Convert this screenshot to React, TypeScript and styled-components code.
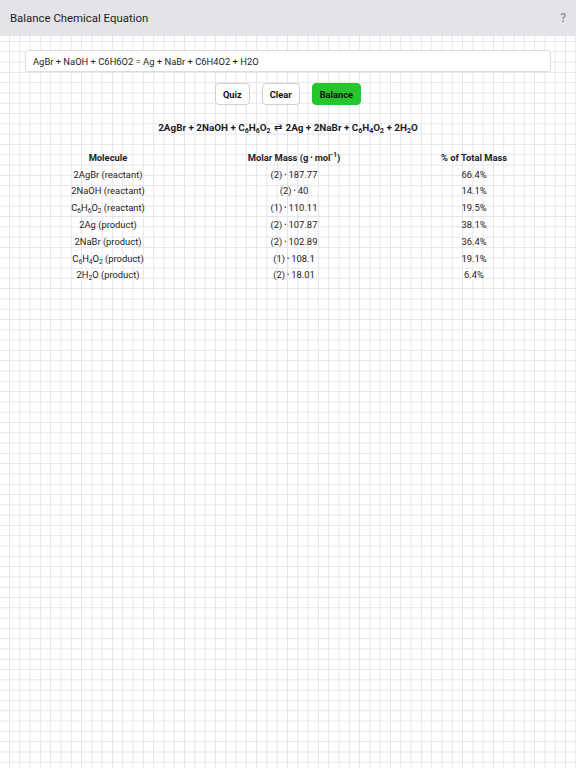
import React from 'react'
import styled, { createGlobalStyle } from 'styled-components'

const GlobalStyle = createGlobalStyle`
  html, body {
    margin: 0;
    padding: 0;
    background: #ffffff;
    font-family: Roboto, "Liberation Sans", "Noto Sans", sans-serif;
    color: #1c1c1e;
  }
`

const Page = styled.div`
  width: 576px;
  height: 768px;
  display: flex;
  flex-direction: column;
  overflow: hidden;
`

const Header = styled.header`
  height: 36px;
  flex-shrink: 0;
  background: #e4e3e8;
  display: flex;
  align-items: center;
  justify-content: space-between;
  padding: 0 10px 0 10px;
  font-size: 11.4px;
  color: #1c1c1e;
`

const Help = styled.span`
  color: #8e8e93;
  font-size: 12px;
  font-weight: 500;
`

const Sheet = styled.main`
  flex: 1;
  background-color: #ffffff;
  background-image:
    linear-gradient(to right, #e6e3ea 1px, transparent 1px),
    linear-gradient(to bottom, #e6e3ea 1px, transparent 1px);
  background-size: 10.3px 10.3px;
  background-position: 9px 5px;
  display: flex;
  flex-direction: column;
  align-items: center;
  padding: 14px 0 0;
`

const EquationInput = styled.input`
  box-sizing: border-box;
  width: 526px;
  height: 22px;
  border: 1px solid #dcdce0;
  border-radius: 3px;
  background: #ffffff;
  padding: 0 7px;
  font-family: inherit;
  font-size: 9.4px;
  color: #1c1c1e;
  outline: none;
`

const ButtonRow = styled.div`
  display: flex;
  gap: 12px;
  margin-top: 11px;
`

const ActionButton = styled.button<{ $primary?: boolean }>`
  height: 22px;
  padding: 0 7px;
  border-radius: 4px;
  font-family: inherit;
  font-size: 9.3px;
  font-weight: 700;
  color: #111;
  background: ${({ $primary }) => ($primary ? '#25c52c' : '#ffffff')};
  border: 1px solid ${({ $primary }) => ($primary ? '#25c52c' : '#cfcfd4')};
`

const Result = styled.div`
  margin-top: 17px;
  font-size: 9.9px;
  font-weight: 700;
  color: #1c1c1e;
`

const Arrow = styled.span`
  font-weight: 400;
  margin: 0 1px;
`

const Table = styled.div`
  align-self: flex-start;
  margin: 16px 0 0 15px;
  display: grid;
  grid-template-columns: 186px 186px 174px;
  grid-auto-rows: 16.8px;
  align-items: center;
  font-size: 9.4px;
`

const HeadCell = styled.div`
  text-align: center;
  font-weight: 700;
`

const Cell = styled.div`
  text-align: center;
`

const Dot = styled.span`
  font-size: 0.7em;
  margin: 0 2px;
  vertical-align: 1px;
`

const Sub = styled.sub`
  font-size: 0.7em;
  line-height: 0;
  vertical-align: -0.25em;
`

const Sup = styled.sup`
  font-size: 0.7em;
  line-height: 0;
`

type Part = string | { sub: string }

const Formula = ({ parts }: { parts: Part[] }) => (
  <>
    {parts.map((p, i) => (typeof p === 'string' ? <React.Fragment key={i}>{p}</React.Fragment> : <Sub key={i}>{p.sub}</Sub>))}
  </>
)

const rows: { mol: Part[]; role: string; coef: string; mass: string; pct: string }[] = [
  { mol: ['2AgBr'], role: 'reactant', coef: '(2)', mass: '187.77', pct: '66.4%' },
  { mol: ['2NaOH'], role: 'reactant', coef: '(2)', mass: '40', pct: '14.1%' },
  { mol: ['C', { sub: '6' }, 'H', { sub: '6' }, 'O', { sub: '2' }], role: 'reactant', coef: '(1)', mass: '110.11', pct: '19.5%' },
  { mol: ['2Ag'], role: 'product', coef: '(2)', mass: '107.87', pct: '38.1%' },
  { mol: ['2NaBr'], role: 'product', coef: '(2)', mass: '102.89', pct: '36.4%' },
  { mol: ['C', { sub: '6' }, 'H', { sub: '4' }, 'O', { sub: '2' }], role: 'product', coef: '(1)', mass: '108.1', pct: '19.1%' },
  { mol: ['2H', { sub: '2' }, 'O'], role: 'product', coef: '(2)', mass: '18.01', pct: '6.4%' },
]

export default function App() {
  return (
    <Page>
      <GlobalStyle />
      <Header>
        <span>Balance Chemical Equation</span>
        <Help>?</Help>
      </Header>
      <Sheet>
        <EquationInput defaultValue="AgBr + NaOH + C6H6O2 = Ag + NaBr + C6H4O2 + H2O" />
        <ButtonRow>
          <ActionButton>Quiz</ActionButton>
          <ActionButton>Clear</ActionButton>
          <ActionButton $primary>Balance</ActionButton>
        </ButtonRow>
        <Result>
          <Formula parts={['2AgBr + 2NaOH + C', { sub: '6' }, 'H', { sub: '6' }, 'O', { sub: '2' }]} />
          <Arrow> ⇄ </Arrow>
          <Formula parts={['2Ag + 2NaBr + C', { sub: '6' }, 'H', { sub: '4' }, 'O', { sub: '2' }, ' + 2H', { sub: '2' }, 'O']} />
        </Result>
        <Table>
          <HeadCell>Molecule</HeadCell>
          <HeadCell>
            Molar Mass (g<Dot>•</Dot>mol<Sup>-1</Sup>)
          </HeadCell>
          <HeadCell>% of Total Mass</HeadCell>
          {rows.map((r, i) => (
            <React.Fragment key={i}>
              <Cell>
                <Formula parts={r.mol} /> ({r.role})
              </Cell>
              <Cell>
                {r.coef}
                <Dot>•</Dot>
                {r.mass}
              </Cell>
              <Cell>{r.pct}</Cell>
            </React.Fragment>
          ))}
        </Table>
      </Sheet>
    </Page>
  )
}
